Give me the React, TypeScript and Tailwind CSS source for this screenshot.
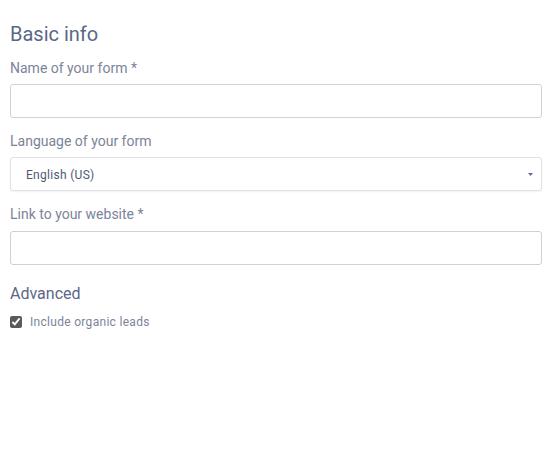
import React from 'react';

const Label: React.FC<{ children: React.ReactNode }> = ({ children }) => (
  <label className="block text-[14px] leading-5 text-[#7b8499]">{children}</label>
);

export default function App() {
  return (
    <div className="min-h-screen bg-white px-[10px] pt-5 font-['Roboto',sans-serif]">
      <h2 className="text-[20px] leading-7 text-[#5b6786]">Basic info</h2>

      <div className="mt-[10px]">
        <Label>Name of your form *</Label>
        <input
          type="text"
          className="mt-[6px] block h-[34px] w-[532px] rounded-[3px] border border-[#cfd2d6] bg-white px-3 outline-none"
        />
      </div>

      <div className="mt-[13px]">
        <Label>Language of your form</Label>
        <div className="relative mt-[6px] flex h-[34px] w-[532px] items-center rounded-[3px] border border-[#e0e2e5] bg-white pl-[15px] pt-[2px] shadow-[0_1px_2px_rgba(0,0,0,0.06)]">
          <span className="text-[12px] tracking-[0.3px] text-[#4f5a74]">English (US)</span>
          <svg className="absolute right-[8px] top-[15px]" width="5" height="3" viewBox="0 0 5 3">
            <path d="M0 0h5L2.5 3z" fill="#5b6f9a" />
          </svg>
        </div>
      </div>

      <div className="mt-[13px]">
        <Label>Link to your website *</Label>
        <input
          type="text"
          className="mt-[7px] block h-[34px] w-[532px] rounded-[3px] border border-[#cfd2d6] bg-white px-3 outline-none"
        />
      </div>

      <h3 className="mt-[17px] text-[16px] leading-6 text-[#5b6786]">Advanced</h3>
      <label className="mt-[8px] flex items-center gap-[8px] text-[12px] leading-4 tracking-[0.3px] text-[#7b8499]">
        <input type="checkbox" defaultChecked className="h-[12px] w-[12px] accent-[#5a5a5a]" />
        Include organic leads
      </label>
    </div>
  );
}
